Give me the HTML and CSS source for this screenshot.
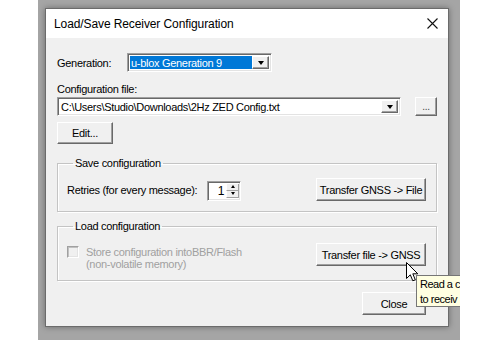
FILE: index.html
```html
<!DOCTYPE html>
<html lang="en">
<head>
    <meta charset="UTF-8">
    <title>Load/Save Receiver Configuration</title>
    <link rel="stylesheet" href="styles.css">
</head>
<body>
    <div class="desktop">
        <div class="dialog">
            <div class="titlebar">
                <span class="title">Load/Save Receiver Configuration</span>
                <svg class="close-x" width="11" height="11" viewBox="0 0 11 11">
                    <path d="M0.5 0.5 L10.5 10.5 M10.5 0.5 L0.5 10.5" stroke="#111" stroke-width="1.1" fill="none"/>
                </svg>
            </div>

            <div class="content">
                <div class="gen-row">
                    <span class="gen-label">Generation:</span>
                    <div class="combo gen-combo">
                        <span class="combo-value selected">u-blox Generation 9</span>
                        <span class="drop-btn"><i class="tri"></i></span>
                    </div>
                </div>

                <div class="field-label">Configuration file:</div>
                <div class="file-row">
                    <div class="combo file-combo">
                        <span class="combo-value">C:\Users\Studio\Downloads\2Hz ZED Config.txt</span>
                        <span class="drop-btn"><i class="tri"></i></span>
                    </div>
                    <button class="btn browse-btn">...</button>
                </div>

                <button class="btn edit-btn">Edit...</button>

                <fieldset class="group save-group">
                    <legend>Save configuration</legend>
                    <div class="group-row">
                        <span class="retries-label">Retries (for every message):</span>
                        <div class="spin">
                            <span class="spin-val">1</span>
                            <span class="spin-btns">
                                <span class="spin-up"><i class="tri-up"></i></span>
                                <span class="spin-down"><i class="tri"></i></span>
                            </span>
                        </div>
                        <button class="btn transfer-btn">Transfer GNSS -&gt; File</button>
                    </div>
                </fieldset>

                <fieldset class="group load-group">
                    <legend>Load configuration</legend>
                    <div class="group-row top">
                        <div class="check-wrap">
                            <span class="checkbox"></span>
                            <span class="check-text">Store configuration intoBBR/Flash<br>(non-volatile memory)</span>
                        </div>
                        <button class="btn transfer-btn">Transfer file -&gt; GNSS</button>
                    </div>
                </fieldset>

                <div class="footer">
                    <button class="btn close-btn">Close</button>
                </div>
            </div>
        </div>

        <!-- mouse pointer + tooltip (cut at the screenshot edge) -->
        <svg class="cursor" width="13" height="20" viewBox="0 0 13 20">
            <path d="M0.5 0.5 L0.5 16.5 L4.3 12.8 L6.8 18.8 L9.3 17.8 L6.8 11.8 L11.8 11.8 Z" fill="#fff" stroke="#000" stroke-width="1" stroke-linejoin="round"/>
        </svg>
        <div class="tooltip">Read a c<br>to receiv</div>
    </div>
</body>
</html>
```

FILE: styles.css
```css
* {
    box-sizing: border-box;
}
body {
    margin: 0;
    background: #fff;
    font-family: "Liberation Sans", Arial, sans-serif;
}
.desktop {
    position: relative;
    width: 422px;
    height: 340px;
    margin-left: 38px;
    padding: 8px 0 0 7px;
    background: #a5a5a5;
    overflow: hidden;
}
.dialog {
    width: 404px;
    height: 319px;
    border: 1px solid #6b6b6b;
    background: #f0f0f0;
    box-shadow: 0 0 6px rgba(0,0,0,0.35);
}
.titlebar {
    height: 29px;
    background: #fff;
    display: flex;
    align-items: center;
    justify-content: space-between;
    padding: 0 10px 0 8px;
}
.title {
    font-size: 12px;
    color: #000;
    letter-spacing: -0.1px;
}
.content {
    padding: 15px 11px 0;
    font-size: 11px;
    letter-spacing: -0.3px;
    color: #000;
}

/* classic 3d controls */
.btn {
    font-family: inherit;
    font-size: 11px;
    letter-spacing: -0.3px;
    color: #000;
    background: #f0f0f0;
    border: 1px solid;
    border-color: #fff #696969 #696969 #fff;
    box-shadow: inset -1px -1px #a0a0a0;
    padding: 0;
    display: flex;
    align-items: center;
    justify-content: center;
}
.combo {
    display: flex;
    background: #fff;
    border: 1px solid;
    border-color: #a0a0a0 #fff #fff #a0a0a0;
    box-shadow: inset 1px 1px #696969, inset -1px -1px #e3e3e3;
    padding: 2px;
}
.combo-value {
    flex: 1;
    display: flex;
    align-items: center;
    padding-left: 1px;
    white-space: nowrap;
    overflow: hidden;
}
.combo-value.selected {
    background: #0078d7;
    color: #fff;
}
.drop-btn {
    width: 17px;
    display: flex;
    align-items: center;
    justify-content: center;
    background: #f0f0f0;
    border: 1px solid;
    border-color: #fff #696969 #696969 #fff;
    box-shadow: inset -1px -1px #a0a0a0;
}
.tri {
    width: 0;
    height: 0;
    border-left: 3.5px solid transparent;
    border-right: 3.5px solid transparent;
    border-top: 4px solid #000;
}
.tri-up {
    width: 0;
    height: 0;
    border-left: 2.5px solid transparent;
    border-right: 2.5px solid transparent;
    border-bottom: 3px solid #000;
}

.gen-row {
    display: flex;
    align-items: center;
    height: 19px;
}
.gen-label {
    width: 70px;
}
.gen-combo {
    width: 145px;
    height: 19px;
}
.field-label {
    margin-top: 11px;
    line-height: 13px;
}
.file-row {
    margin-top: 1px;
    display: flex;
    align-items: center;
    gap: 14px;
}
.file-combo {
    width: 344px;
    height: 19px;
}
.browse-btn {
    width: 22px;
    height: 19px;
    align-items: flex-end;
    padding-bottom: 3px;
    font-size: 10px;
    color: #444;
}
.edit-btn {
    margin-top: 6px;
    width: 56px;
    height: 22px;
}

/* group boxes */
.group {
    margin: 13px 0 0;
    border: 1px solid #c4c4c4;
    box-shadow: inset 1px 1px #fff, 1px 1px #fff;
    padding: 8px 10px 10px 9px;
    min-width: 0;
}
.group legend {
    margin-left: 6px;
    padding: 0 2px;
    line-height: 13px;
}
.load-group {
    margin-top: 8px;
    padding-top: 10px;
}
.group-row {
    display: flex;
    align-items: center;
}
.group-row.top {
    align-items: flex-start;
}
.retries-label {
    width: 140px;
}
.spin {
    display: flex;
    width: 34px;
    height: 20px;
    margin-top: 2px;
    background: #fff;
    border: 1px solid;
    border-color: #a0a0a0 #fff #fff #a0a0a0;
    box-shadow: inset 1px 1px #696969, inset -1px -1px #e3e3e3;
    padding: 2px 1px 2px 2px;
}
.spin-val {
    flex: 1;
    text-align: right;
    padding-right: 2px;
    line-height: 14px;
    font-size: 12px;
}
.spin-btns {
    width: 13px;
    display: flex;
    flex-direction: column;
}
.spin-up, .spin-down {
    flex: 1;
    display: flex;
    align-items: center;
    justify-content: center;
    background: #f0f0f0;
    border-right: 1px solid #a0a0a0;
    border-bottom: 1px solid #a0a0a0;
    border-left: 1px solid #fff;
}
.spin-down .tri {
    border-left-width: 2.5px;
    border-right-width: 2.5px;
    border-top-width: 3px;
}
.transfer-btn {
    margin-left: auto;
    width: 110px;
    height: 23px;
}
.check-wrap {
    display: flex;
    gap: 7px;
    margin-top: 3px;
}
.checkbox {
    width: 12px;
    height: 12px;
    border: 1px solid;
    border-color: #a0a0a0 #fff #fff #a0a0a0;
    box-shadow: inset 1px 1px #c0c0c0, inset -1px -1px #e3e3e3;
    background: #f0f0f0;
}
.check-text {
    color: #a0a0a0;
    line-height: 12px;
}
.footer {
    display: flex;
    justify-content: flex-end;
    margin-top: 11px;
    padding-right: 11px;
}
.close-btn {
    width: 64px;
    height: 23px;
}

/* overlays */
.cursor {
    position: absolute;
    left: 368px;
    top: 262px;
}
.tooltip {
    position: absolute;
    left: 378px;
    top: 275px;
    width: 50px;
    height: 32px;
    padding: 1px 0 0 3px;
    background: #ffffe1;
    border: 1px solid #767676;
    border-right: none;
    font-size: 11px;
    letter-spacing: -0.5px;
    line-height: 15px;
    color: #000;
    white-space: nowrap;
}
```
